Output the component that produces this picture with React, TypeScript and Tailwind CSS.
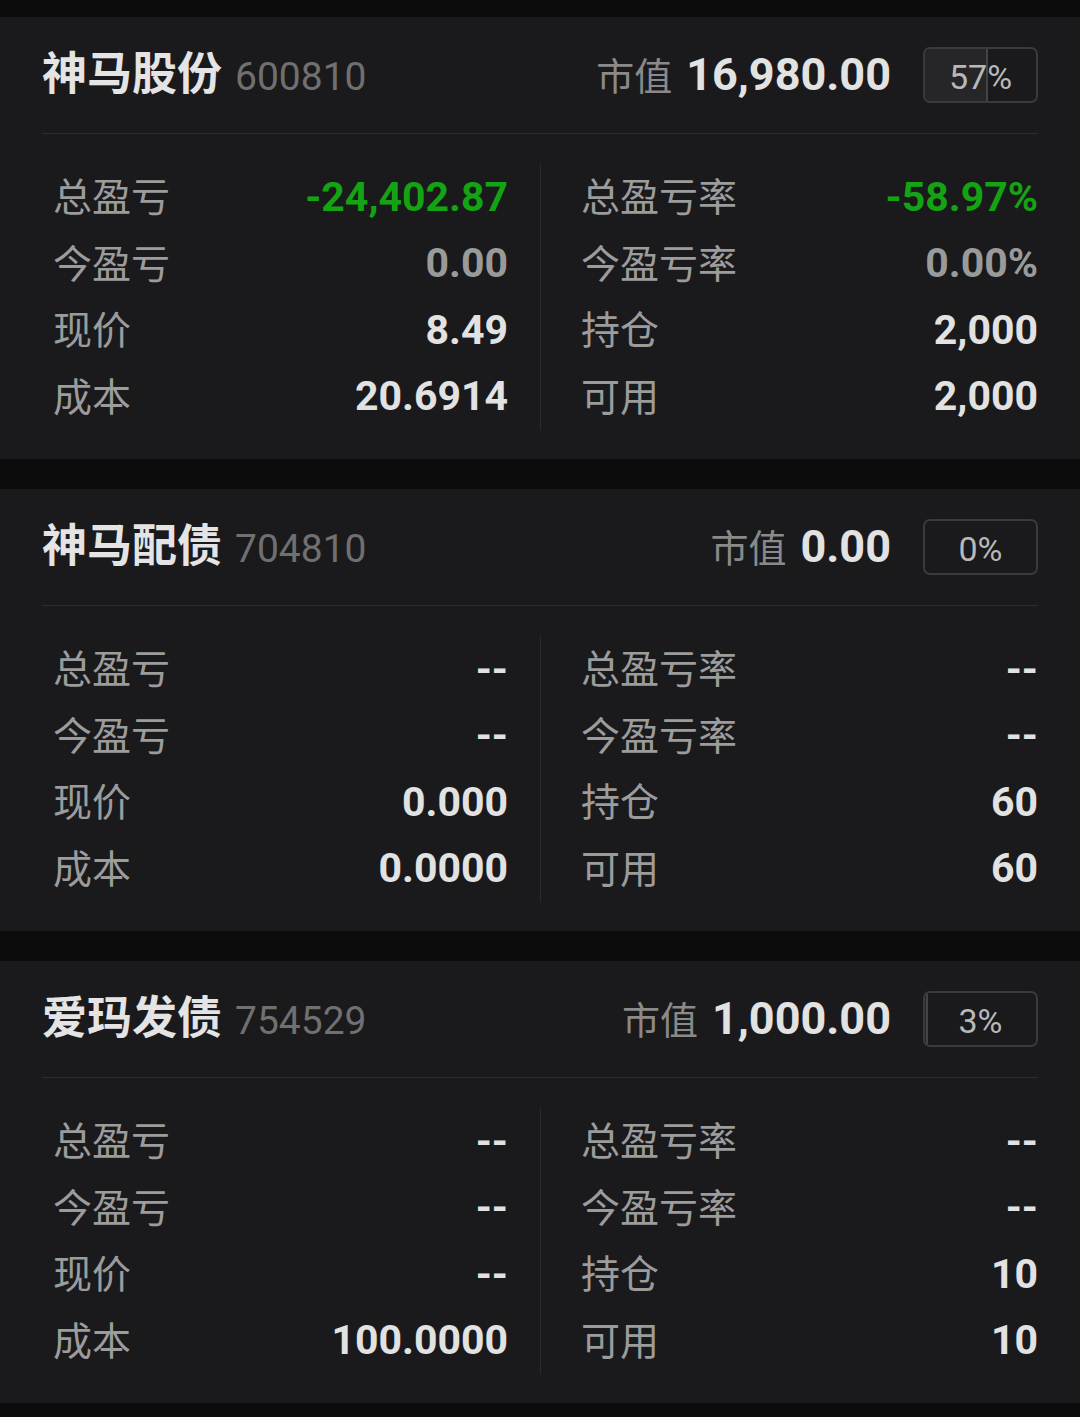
import React from "react";

type Row = { l: string; v: string; c?: string };
type Card = {
  name: string;
  code: string;
  mv: string;
  pct: number;
  left: Row[];
  right: Row[];
};

const W = "text-[#e2e2e2]";
const G = "text-[#9a9a9a]";
const GREEN = "text-[#13a313]";

const cards: Card[] = [
  {
    name: "神马股份",
    code: "600810",
    mv: "16,980.00",
    pct: 57,
    left: [
      { l: "总盈亏", v: "-24,402.87", c: GREEN },
      { l: "今盈亏", v: "0.00", c: G },
      { l: "现价", v: "8.49" },
      { l: "成本", v: "20.6914" },
    ],
    right: [
      { l: "总盈亏率", v: "-58.97%", c: GREEN },
      { l: "今盈亏率", v: "0.00%", c: G },
      { l: "持仓", v: "2,000" },
      { l: "可用", v: "2,000" },
    ],
  },
  {
    name: "神马配债",
    code: "704810",
    mv: "0.00",
    pct: 0,
    left: [
      { l: "总盈亏", v: "--" },
      { l: "今盈亏", v: "--" },
      { l: "现价", v: "0.000" },
      { l: "成本", v: "0.0000" },
    ],
    right: [
      { l: "总盈亏率", v: "--" },
      { l: "今盈亏率", v: "--" },
      { l: "持仓", v: "60" },
      { l: "可用", v: "60" },
    ],
  },
  {
    name: "爱玛发债",
    code: "754529",
    mv: "1,000.00",
    pct: 3,
    left: [
      { l: "总盈亏", v: "--" },
      { l: "今盈亏", v: "--" },
      { l: "现价", v: "--" },
      { l: "成本", v: "100.0000" },
    ],
    right: [
      { l: "总盈亏率", v: "--" },
      { l: "今盈亏率", v: "--" },
      { l: "持仓", v: "10" },
      { l: "可用", v: "10" },
    ],
  },
];

const CJK = { fontFamily: '"Noto Sans CJK SC", "Noto Sans", sans-serif' };
const NUM = { fontFamily: 'Roboto, "Noto Sans CJK SC", sans-serif' };

function DataRow({ r }: { r: Row }) {
  return (
    <div className="h-[66.5px] flex items-center justify-between">
      <span className="text-[39px] leading-none text-[#9c9c9c] pb-[5px]" style={CJK}>
        {r.l}
      </span>
      <span
        className={`text-[41px] leading-none font-bold ${r.c ?? W}`}
        style={NUM}
      >
        {r.v}
      </span>
    </div>
  );
}

function PctBox({ pct }: { pct: number }) {
  return (
    <div className="relative w-[115px] h-[56px] rounded-[7px] border-2 border-[#3a3a3c] overflow-hidden flex items-center justify-center">
      {pct > 0 && (
        <div
          className="absolute left-0 top-0 bottom-0 bg-[#262628] border-r-2 border-[#444446]"
          style={{ width: `${pct}%` }}
        />
      )}
      <span
        className="relative text-[34px] leading-none text-[#b8b8b8] pt-[3px]"
        style={NUM}
      >
        {pct}%
      </span>
    </div>
  );
}

function CardView({ c }: { c: Card }) {
  return (
    <div className="bg-[#1a1a1c] h-[442px] px-[42px]">
      <div className="h-[117px] flex items-center justify-between border-b border-[#2c2c2e]">
        <div className="flex items-baseline gap-[13px] mb-[6px]">
          <span
            className="text-[45px] leading-none font-bold text-[#e4e4e4]"
            style={CJK}
          >
            {c.name}
          </span>
          <span className="text-[39px] leading-none text-[#707070]" style={NUM}>
            {c.code}
          </span>
        </div>
        <div className="flex items-center gap-[32px]">
          <div className="flex items-baseline gap-[14px] mb-[2px]">
            <span className="text-[38px] leading-none text-[#8a8a8a]" style={CJK}>
              市值
            </span>
            <span
              className="text-[45px] leading-none font-bold text-[#e2e2e2]"
              style={NUM}
            >
              {c.mv}
            </span>
          </div>
          <PctBox pct={c.pct} />
        </div>
      </div>
      <div className="pt-[30px] flex">
        <div className="w-[498px] pl-[11px] pr-[32px]">
          {c.left.map((r) => (
            <DataRow key={r.l} r={r} />
          ))}
        </div>
        <div className="w-px bg-[#2a2a2c]" />
        <div className="flex-1 pl-[40px]">
          {c.right.map((r) => (
            <DataRow key={r.l} r={r} />
          ))}
        </div>
      </div>
    </div>
  );
}

export default function App() {
  return (
    <div className="w-[1080px] min-h-[1417px] bg-[#0c0c0d] pt-[17px] flex flex-col gap-[30px]">
      {cards.map((c) => (
        <CardView key={c.code} c={c} />
      ))}
    </div>
  );
}
